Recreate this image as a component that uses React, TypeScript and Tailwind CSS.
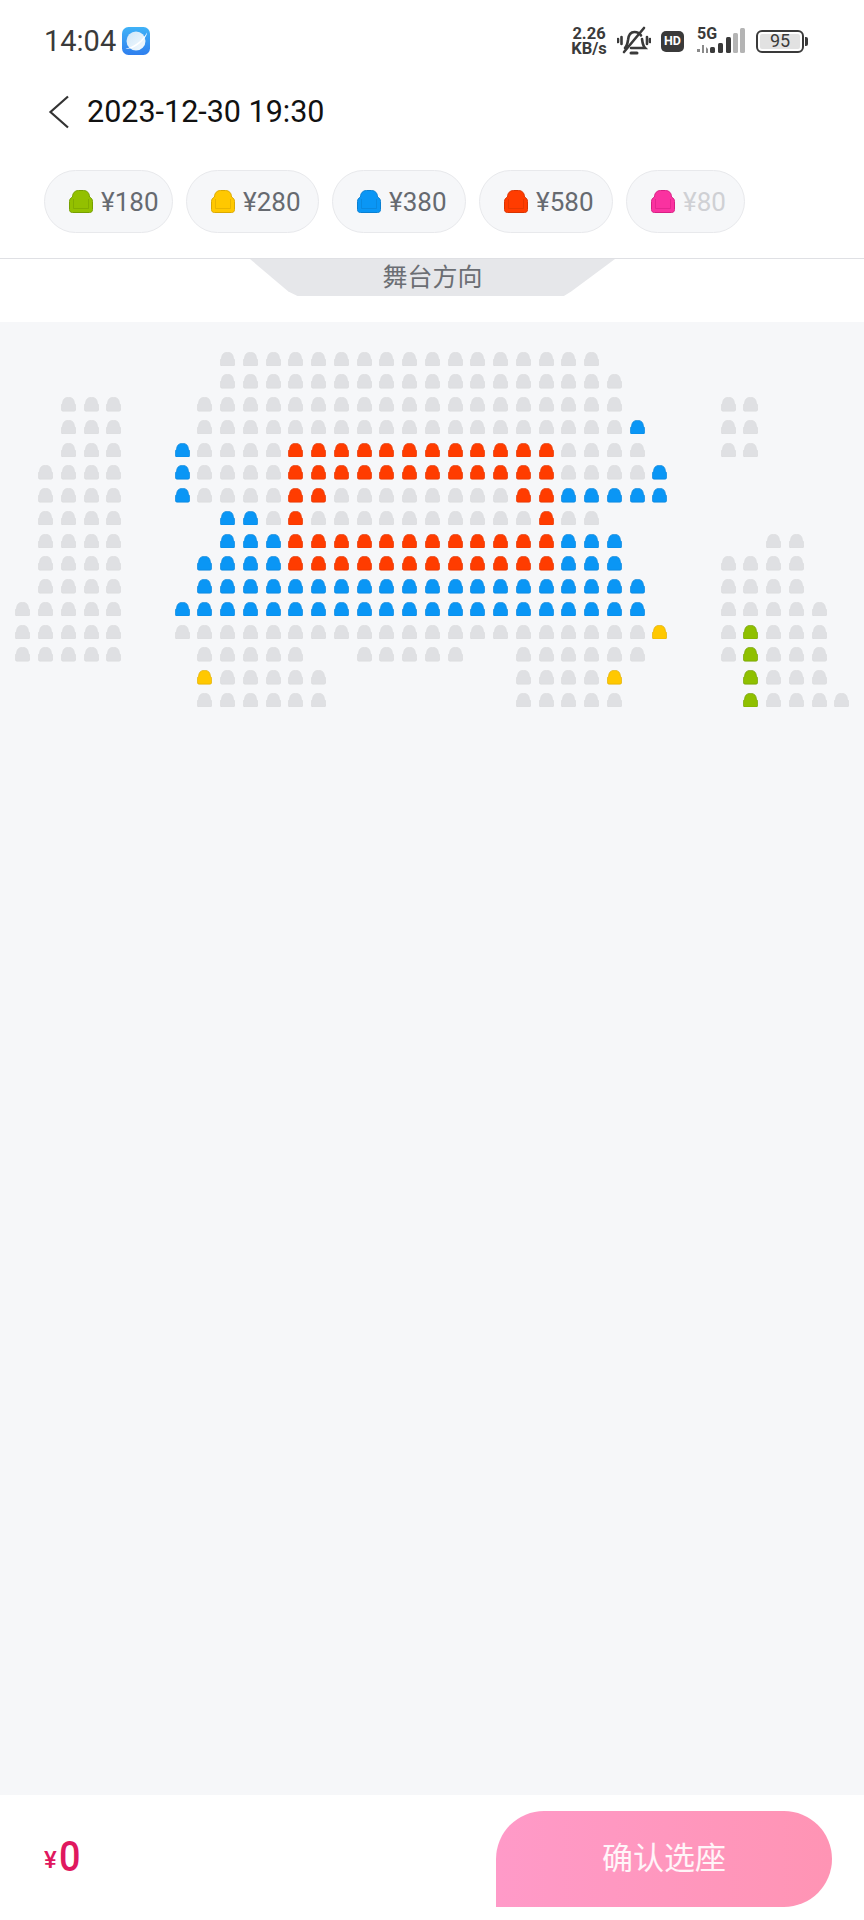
const FONT = "font-['Roboto','Noto_Sans_CJK_SC',sans-serif]";

type Level = "g" | "y" | "b" | "r";

const seatColors: Record<Level, { fill: string; line: string }> = {
  g: { fill: "#dfe0e3", line: "#dadbde" },
  y: { fill: "#ffc800", line: "#dcaa00" },
  b: { fill: "#0a96f5", line: "#0a84d8" },
  r: { fill: "#ff3c00", line: "#e03500" },
};

// each row is 37 cols, "." means no seat
const rows = [
  ".........ggggggggggggggggg...........",
  ".........gggggggggggggggggg..........",
  "..ggg...ggggggggggggggggggg....gg....",
  "..ggg...gggggggggggggggggggb...gg....",
  "..ggg..bggggrrrrrrrrrrrrgggg...gg....",
  ".gggg..bggggrrrrrrrrrrrrggggb........",
  ".gggg..bggggrrggggggggrrbbbbb........",
  ".gggg....bbgrggggggggggrgg...........",
  ".gggg....bbbrrrrrrrrrrrrbbb......gg..",
  ".gggg...bbbbrrrrrrrrrrrrbbb....gggg..",
  ".gggg...bbbbbbbbbbbbbbbbbbbb...gggg..",
  "ggggg..bbbbbbbbbbbbbbbbbbbbb...ggggg.",
  "ggggg..gggggggggggggggggggggy..gPggg.",
  "ggggg...ggggg..ggggg..gggggg...gPggg.",
  "........yggggg........ggggy.....Pggg.",
  "........gggggg........ggggg.....Pgggg",
];

const SEAT_PATH =
  "M3.500 7C3.500 3 6 .5 9.500 .5h5c3.500 0 6 2.500 6 6.500 2 1 3 2.500 3 4.500v8c0 2-1 3-3 3h-17c-2 0-3-1-3-3v-8c0-2 1-3.500 3-4.500z";

function SeatIcon({ fill, line, className }: { fill: string; line: string; className: string }) {
  return (
    <svg viewBox="0 0 24 23" className={className}>
      <path d={SEAT_PATH} fill={fill} stroke={line} strokeWidth="1" />
      <path d="M4.500 9v9.500h15V9" fill="none" stroke={line} strokeWidth="1" opacity="0.6" />
    </svg>
  );
}

function Seat({ level }: { level: string }) {
  if (level === ".") return <div />;
  const c = level === "P" ? { fill: "#8fc000", line: "#6f9a00" } : seatColors[level as Level];
  return (
    <div className="flex items-center justify-center">
      <svg viewBox="0 0 24 23" className="h-[14.500px] w-[15px]">
        <path
          d="M2.500 10C2.500 4 6 .5 11 .5h2c5 0 8.500 3.500 8.500 9.500 1.500 1 2 2.500 2 4v5c0 2.500-1 3.500-3 3.500h-17c-2 0-3-1-3-3.500v-5c0-1.500.5-3 2-4z"
          fill={c.fill}
          stroke={c.line}
          strokeWidth="1"
        />
      </svg>
    </div>
  );
}

const prices = [
  { label: "¥180", fill: "#93c000", line: "#76a000", width: "w-[129px]", text: "text-[#666a70]" },
  { label: "¥280", fill: "#ffc800", line: "#dba900", width: "w-[133px]", text: "text-[#666a70]" },
  { label: "¥380", fill: "#0a96f5", line: "#0a80d2", width: "w-[134px]", text: "text-[#666a70]" },
  { label: "¥580", fill: "#ff3c00", line: "#d93300", width: "w-[134px]", text: "text-[#666a70]" },
  { label: "¥80", fill: "#fa32a0", line: "#d81e84", width: "w-[119px]", text: "text-[#cfd0d4]" },
];

function StatusBar() {
  return (
    <div className="flex h-[68px] items-center justify-between pl-[44px] pr-[56px] pt-[14px] text-[#3a3a3a]">
      <div className="flex items-center gap-[6px]">
        <span className="text-[29px] leading-none">14:04</span>
        <svg viewBox="0 0 28 28" className="h-[28px] w-[28px]">
          <defs>
            <linearGradient id="planetBg" x1="0" y1="0" x2="0" y2="1">
              <stop offset="0" stopColor="#3fb2f7" />
              <stop offset="1" stopColor="#2f7fee" />
            </linearGradient>
            <linearGradient id="planetBody" x1="0" y1="0" x2="1" y2="1">
              <stop offset="0" stopColor="#cfe6f8" />
              <stop offset="1" stopColor="#f4fafe" />
            </linearGradient>
          </defs>
          <rect width="28" height="28" rx="6.500" fill="url(#planetBg)" />
          <circle cx="14" cy="14" r="9.500" fill="url(#planetBody)" />
          <path d="M3.500 21.500C10 21 21 13.500 25 5.500 25 11 13 23.500 3.500 21.500z" fill="#fff" />
        </svg>
      </div>
      <div className="flex items-center">
        <div className="mr-[9px] flex w-[38px] flex-col items-center text-[16.500px] font-bold leading-[15px]">
          <span>2.26</span>
          <span>KB/s</span>
        </div>
        <svg viewBox="0 0 34 30" className="mr-[10px] h-[30px] w-[34px]" fill="none" stroke="#3a3a3a" strokeWidth="2.600" strokeLinecap="round">
          <path d="M8 22c2-2 2.500-4 3-8 .5-5 3-8 6.500-8 3 0 5 1 6.500 3.500M25 13c.5 4 1 7 3 9H14" />
          <path d="M14 27h6" strokeWidth="3" />
          <path d="M7 26 27 2" />
          <path d="M4.500 11v7M1 13v3M30 11v7M33 13v3" />
        </svg>
        <span className="mr-[12px] flex h-[21px] w-[23px] items-center justify-center rounded-[5px] bg-[#3a3a3a] text-[12.500px] font-bold text-white">
          HD
        </span>
        <div className="relative mr-[10px] h-[26px] w-[50px]">
          <span className="absolute left-[1px] top-[-2px] text-[16px] font-bold leading-[15px]">5G</span>
          <svg viewBox="0 0 50 26" className="h-[26px] w-[50px]">
            <path d="M1 21h3v3H1zM6 17h2v8H6zM10 19l2 2v4h-2z" fill="#8a8a8a" />
            <rect x="14" y="19" width="5" height="6" rx="1.500" fill="#3a3a3a" />
            <rect x="22" y="15" width="5" height="10" rx="1.500" fill="#3a3a3a" />
            <rect x="30" y="9" width="5" height="16" rx="1.500" fill="#3a3a3a" />
            <rect x="37" y="5" width="5" height="20" rx="1.500" fill="#b4b4b4" />
            <rect x="44" y="0" width="5" height="25" rx="1.500" fill="#b4b4b4" />
          </svg>
        </div>
        <div className="flex items-center">
          <div className="flex h-[23px] w-[48px] items-center rounded-[6px] border-2 border-[#3a3a3a] p-[2px]">
            <div className="flex h-full w-full items-center justify-center rounded-[2px] bg-[#e2e2e2] text-[18px] leading-none">
              95
            </div>
          </div>
          <div className="ml-[1px] h-[9px] w-[3px] rounded-r-[2px] bg-[#3a3a3a]" />
        </div>
      </div>
    </div>
  );
}

export default function App() {
  return (
    <div className={`flex h-[1920px] w-[864px] flex-col overflow-hidden bg-white ${FONT}`}>
      <StatusBar />

      <div className="flex h-[88px] items-center pl-[48px]">
        <svg viewBox="0 0 22 34" className="h-[34px] w-[22px]" fill="none" stroke="#333" strokeWidth="2.200">
          <path d="M20 1.500 2.500 17 20 32.500" />
        </svg>
        <span className="ml-[17px] text-[30.500px] leading-none text-[#111]">2023-12-30 19:30</span>
      </div>

      <div className="mt-[14px] flex gap-[13px] pl-[44px]">
        {prices.map((p) => (
          <div
            key={p.label}
            className={`flex h-[63px] items-center gap-[8px] rounded-full border border-[#e8e9ec] bg-[#f6f7f9] pl-[24px] ${p.width}`}
          >
            <SeatIcon fill={p.fill} line={p.line} className="h-[23px] w-[24px]" />
            <span className={`text-[26px] leading-none ${p.text}`}>{p.label}</span>
          </div>
        ))}
      </div>

      <div className="mt-[25px] h-[1px] bg-[#dfe0e4]" />

      <div className="flex h-[63px] justify-center pl-[1px]">
        <div className="flex h-[37px] w-[365px] items-center justify-center bg-[#e6e7ea] text-[25px] leading-none text-[#6b6e73] [clip-path:polygon(0_0,100%_0,88%_88%,86%_100%,13%_100%,10.500%_88%)]">
          舞台方向
        </div>
      </div>

      <div className="flex-1 bg-[#f6f7f9] pl-[11.500px] pt-[25.500px]">
        <div className="grid grid-cols-[repeat(37,22.75px)] auto-rows-[22.75px]">
          {rows.map((row, r) =>
            row.split("").map((level, c) => <Seat key={`${r}-${c}`} level={level} />),
          )}
        </div>
      </div>

      <div className="flex h-[125px] items-start justify-between bg-white pl-[44px] pr-[32px] pt-[16px]">
        <div className="mt-[30px] flex items-end font-medium leading-none text-[#e0185f]">
          <span className="mb-[1px] text-[24px]">¥</span>
          <span className="ml-[2px] origin-left scale-x-[.9] text-[42px] leading-[32px]">0</span>
        </div>
        <div className="flex h-[96px] w-[336px] items-center justify-center rounded-[48px] rounded-bl-none bg-gradient-to-r from-[#ff9ac8] to-[#ff94b4] text-[31px] text-white/90">
          确认选座
        </div>
      </div>
    </div>
  );
}
